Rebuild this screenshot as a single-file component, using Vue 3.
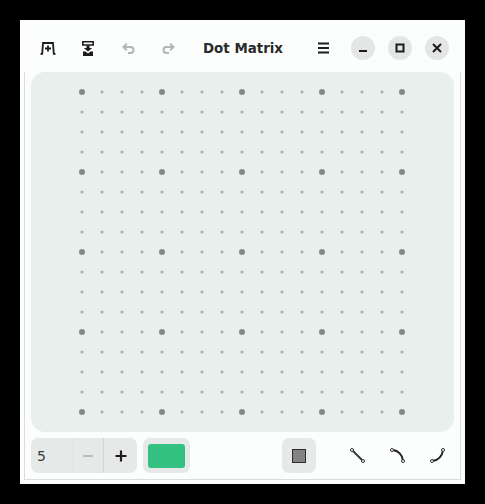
<script setup>
const count = 17
const dots = []
for (let row = 0; row < count; row++) {
  for (let col = 0; col < count; col++) {
    const major = row % 4 === 0 && col % 4 === 0
    dots.push({ id: row + '-' + col, x: col * 20, y: row * 20, r: major ? 3 : 1.6, major })
  }
}
</script>

<template>
  <div class="window">
    <header class="titlebar">
      <div class="tools">
        <button class="tool">
          <svg width="16" height="13" viewBox="0 0 16 13"><path d="M.5 11.800h1.700l.8-10.800h10l.8 10.800h1.700" fill="none" stroke="#1c1c1c" stroke-width="1.800"/><path d="M8 3.500v6M5 6.500h6" stroke="#1c1c1c" stroke-width="1.800" fill="none"/></svg>
        </button>
        <button class="tool">
          <svg width="12" height="15" viewBox="0 0 12 15"><path d="M0 .8h12M0 3.900h12M.8 .8v3.100M11.200 .8v3.100" fill="none" stroke="#1c1c1c" stroke-width="1.500"/><path d="M4.500 4.500v2.500H1.800l4.200 3.500L10.200 7H7.500V4.500z" fill="#1c1c1c"/><path d="M1 10.500h2.500L6 12.500l2.500-2h2.500V15H1z" fill="#1c1c1c"/></svg>
        </button>
        <button class="tool">
          <svg width="13" height="11" viewBox="0 0 13 11"><path d="M4.800 .8 1.500 4l3.300 3.200M2 4h6.500a3 3 0 0 1 0 6H6" fill="none" stroke="#b4b6b5" stroke-width="2"/></svg>
        </button>
        <button class="tool">
          <svg width="13" height="11" viewBox="0 0 13 11"><path d="M8.200 .8 11.500 4 8.200 7.200M11 4H4.500a3 3 0 0 0 0 6H7" fill="none" stroke="#b4b6b5" stroke-width="2"/></svg>
        </button>
      </div>
      <h1 class="title">Dot Matrix</h1>
      <div class="controls">
        <button class="menu">
          <svg width="11" height="12" viewBox="0 0 11 12"><path d="M0 1.500h11M0 6h11M0 10.500h11" stroke="#1c1c1c" stroke-width="1.800"/></svg>
        </button>
        <button class="round">
          <svg width="10" height="10" viewBox="0 0 10 10"><path d="M1 8h8" stroke="#1c1c1c" stroke-width="2"/></svg>
        </button>
        <button class="round">
          <svg width="10" height="10" viewBox="0 0 10 10"><rect x="1.500" y="1.500" width="7" height="7" fill="none" stroke="#1c1c1c" stroke-width="2"/></svg>
        </button>
        <button class="round">
          <svg width="10" height="10" viewBox="0 0 10 10"><path d="M1 1l8 8M9 1l-8 8" stroke="#1c1c1c" stroke-width="2"/></svg>
        </button>
      </div>
    </header>

    <main class="body">
      <div class="canvas">
        <svg class="grid" width="330" height="330" viewBox="-5 -5 330 330">
          <circle v-for="d in dots" :key="d.id" :cx="d.x" :cy="d.y" :r="d.r" :fill="d.major ? '#858a89' : '#abb0af'" />
        </svg>
      </div>

      <footer class="bottom">
        <div class="spin">
          <span class="value">5</span>
          <button class="step minus">
            <svg width="12" height="12" viewBox="0 0 12 12"><path d="M1 6h10" stroke="#bcbebd" stroke-width="2"/></svg>
          </button>
          <button class="step plus">
            <svg width="12" height="12" viewBox="0 0 12 12"><path d="M6 .5v11M.5 6h11" stroke="#1c1c1c" stroke-width="2.200"/></svg>
          </button>
        </div>
        <button class="color"><span class="swatch"></span></button>
        <button class="square"><span class="fill"></span></button>
        <div class="lines">
          <svg width="15" height="15" viewBox="0 0 15 15"><path d="M2.500 2.500 12.500 12.500" stroke="#333" stroke-width="1.800"/><circle cx="2" cy="2" r="1.500" fill="#fbfefc" stroke="#333"/><circle cx="13" cy="13" r="1.500" fill="#fbfefc" stroke="#333"/></svg>
          <svg width="15" height="15" viewBox="0 0 15 15"><path d="M3 2C8 2.500 12 6.500 12.800 12" fill="none" stroke="#222" stroke-width="2"/><circle cx="2" cy="2" r="1.500" fill="#fbfefc" stroke="#333"/><circle cx="13" cy="13" r="1.500" fill="#fbfefc" stroke="#333"/></svg>
          <svg width="15" height="15" viewBox="0 0 15 15"><path d="M12.800 3C12.300 8 8 12.300 3 12.800" fill="none" stroke="#222" stroke-width="2"/><circle cx="13" cy="2" r="1.500" fill="#fbfefc" stroke="#333"/><circle cx="2" cy="13" r="1.500" fill="#fbfefc" stroke="#333"/></svg>
        </div>
      </footer>
    </main>
  </div>
</template>

<style>
html, body {
  margin: 0;
  background: #000;
}
</style>

<style scoped>
.window {
  box-sizing: border-box;
  width: 445px;
  height: 464px;
  margin: 20px;
  background: #fbfefc;
  font-family: "DejaVu Sans", sans-serif;
  color: #222;
}

button {
  border: none;
  background: none;
  padding: 0;
  display: flex;
  align-items: center;
  justify-content: center;
}

.titlebar {
  box-sizing: border-box;
  height: 52px;
  padding-top: 4px;
  display: flex;
  align-items: center;
}

.tools {
  display: flex;
  gap: 8px;
  margin-left: 12px;
}

.tool {
  width: 32px;
  height: 32px;
}

.title {
  margin: 0 0 0 19px;
  font-size: 13.400px;
  font-weight: 700;
  color: #2a2a2a;
  white-space: nowrap;
}

.controls {
  display: flex;
  align-items: center;
  margin-left: auto;
  margin-right: 16px;
}

.menu {
  width: 24px;
  height: 24px;
  margin-right: 16px;
}

.round {
  width: 24px;
  height: 24px;
  border-radius: 50%;
  background: #e3e6e4;
  margin-left: 13px;
}

.menu + .round {
  margin-left: 0;
}

.body {
  box-sizing: border-box;
  height: 408px;
  margin: 0 4px 4px;
  border: solid #dadddb;
  border-width: 0 1px 1px;
  padding: 0 6px;
  display: flex;
  flex-direction: column;
}

.canvas {
  height: 360px;
  border-radius: 14px;
  background: #e8f0ee;
}

.grid {
  display: block;
  margin: 15px 0 0 46px;
}

.bottom {
  display: flex;
  align-items: center;
  margin-top: 6px;
}

.spin {
  display: flex;
  align-items: center;
  width: 106px;
  height: 35px;
  border-radius: 7px;
  background: #e6e9e7;
}

.value {
  width: 41px;
  padding-left: 6px;
  box-sizing: border-box;
  font-size: 14px;
  color: #3a3a3a;
}

.step {
  width: 33px;
  height: 35px;
}

.minus {
  border-left: 1px solid #e2e5e3;
  border-right: 1px solid #d2d5d3;
}

.color {
  width: 47px;
  height: 35px;
  margin-left: 6px;
  border-radius: 7px;
  background: #e6e9e7;
}

.swatch {
  width: 37px;
  height: 24px;
  border-radius: 3px;
  background: #33c181;
}

.square {
  width: 34px;
  height: 35px;
  margin-left: 92px;
  border-radius: 7px;
  background: #e6e9e7;
}

.fill {
  box-sizing: border-box;
  width: 14px;
  height: 14px;
  background: #848484;
  border: 1.500px solid #2c2c2c;
}

.lines {
  display: flex;
  gap: 25px;
  margin-left: 34px;
}
</style>
